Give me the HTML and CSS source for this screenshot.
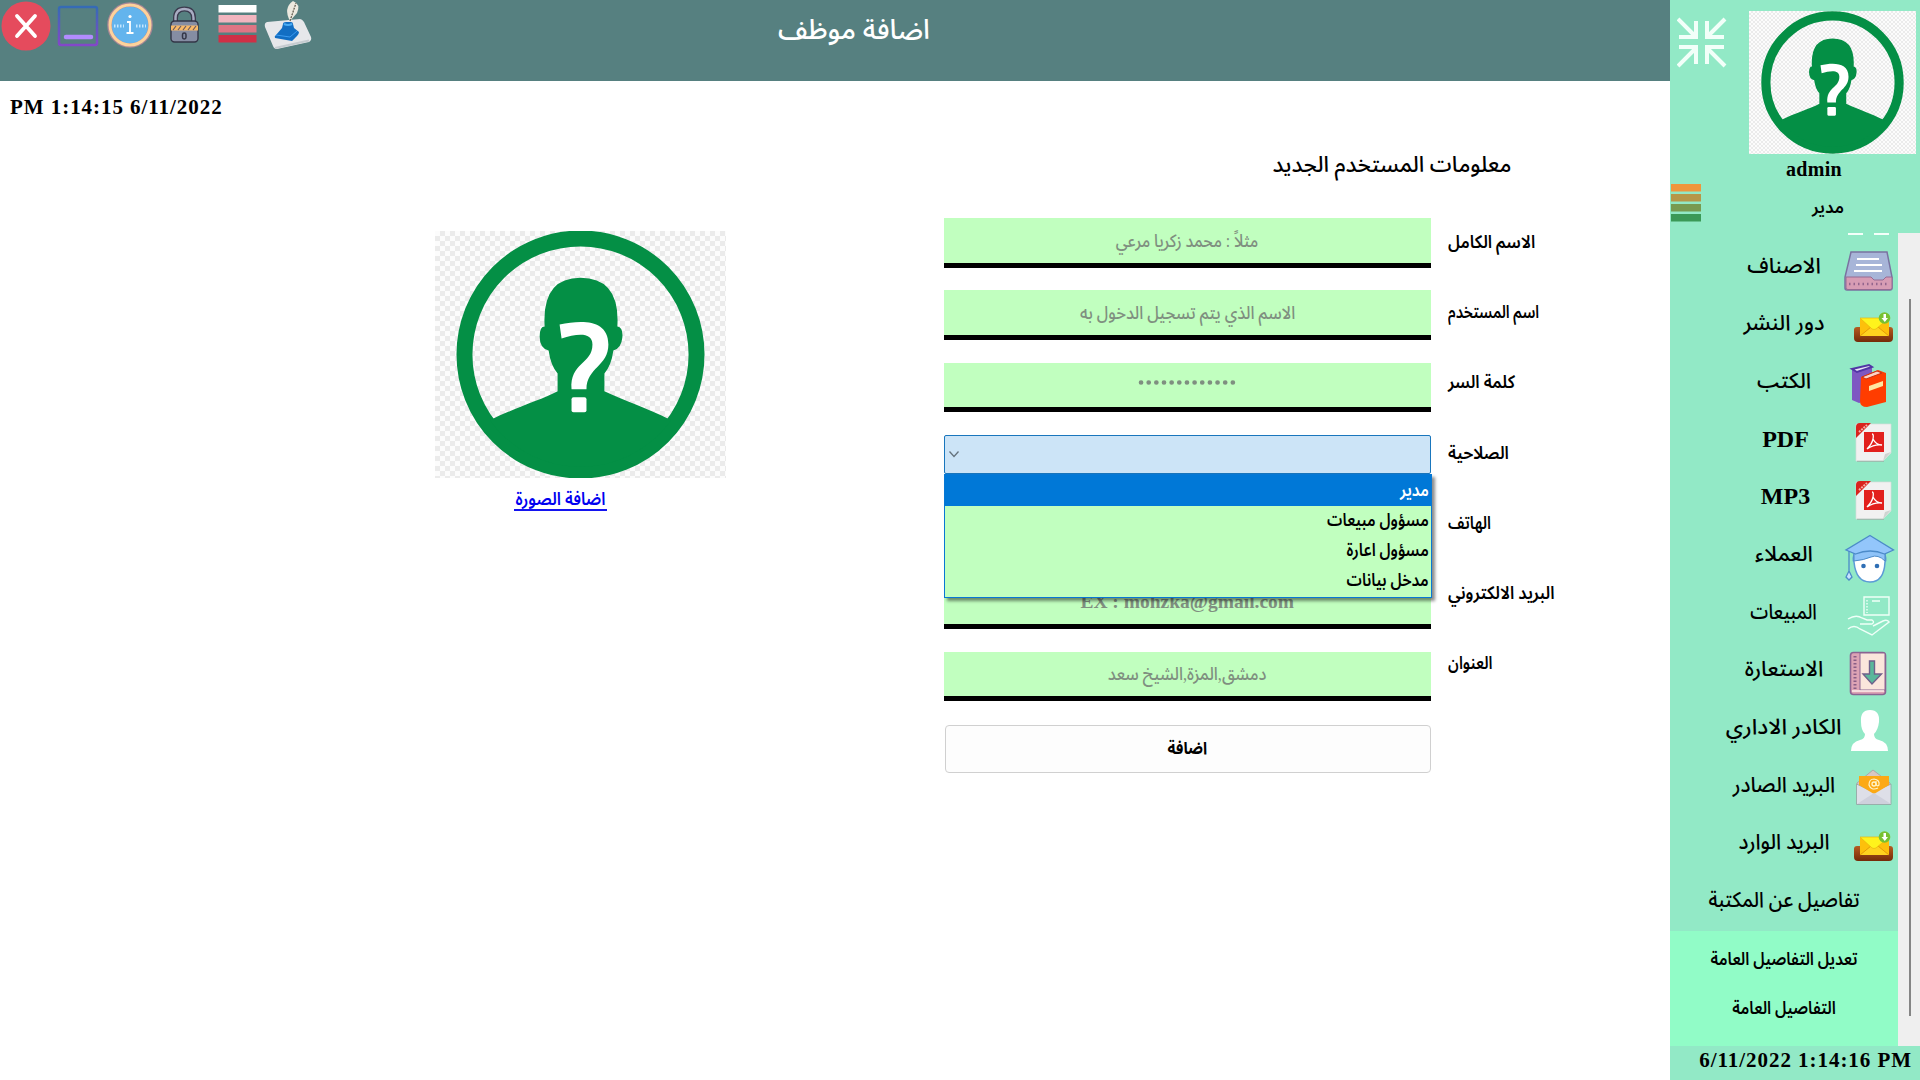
FILE: index.html
```html
<!DOCTYPE html>
<html lang="ar">
<head>
<meta charset="utf-8">
<title>اضافة موظف</title>
<link rel="stylesheet" href="styles.css">
</head>
<body>
<svg class="defs" width="0" height="0" aria-hidden="true">
  <symbol id="person" viewBox="0 0 250 248">
    <circle cx="125" cy="124" r="116.500" fill="none" stroke="#048f45" stroke-width="16"/>
    <path fill="#048f45" d="M34 190 C60 177 85 170 102 161 L102 143 Q95 135 93 120 Q84 118 84 106 Q84 96 89 96 Q86 47 125 47 Q165 47 162 96 Q168 97 167 107 Q166 118 158 120 Q156 135 149 143 L149 161 C168 170 190 177 216 190 A112 112 0 0 1 34 190Z"/>
    <path fill="#fff" d="M104 94 C127 89 153 89 153 114 C153 136 131 137 131 159 L116 159 C114 132 137 134 137 114 C137 101 121 103 106 108Z"/>
    <rect x="116" y="167" width="15" height="15" rx="2" fill="#fff"/>
  </symbol>
  <symbol id="inbox" viewBox="0 0 50 50">
    <defs><linearGradient id="wood" x2="0" y2="1"><stop stop-color="#b55b20"/><stop offset="1" stop-color="#752a08"/></linearGradient></defs>
    <path d="M9 27q0-3 3-3h3v7h29v-7h1q3 0 3 3v8q0 4-4 4H13q-4 0-4-4z" fill="url(#wood)"/>
    <path d="M15 16h29v17H15z" fill="#fdc00b"/>
    <path d="M15 33l11-9h7l11 9" fill="#ffd21f" stroke="#e59a08"/>
    <path d="M15 15h29L31 26q-2 1-4 0z" fill="#fff31c" stroke="#e9b50c" stroke-width=".7"/>
    <circle cx="39.500" cy="15" r="5.800" fill="#78c131"/><path d="M38.500 11h2.500v4h2l-3.200 4-3.300-4h2z" fill="#fff"/>
  </symbol>
  <symbol id="pdf" viewBox="0 0 50 50">
    <path d="M11 6h35v29l-8 8H11z" fill="#f1f1f1" stroke="#d7dcda" stroke-width=".7"/>
    <path d="M12 43.300h27" stroke="#9bb5a9"/><path d="M38 43l2-7 6-2z" fill="#cfd4d1"/>
    <path d="M11 14V9q0-4 4-4h11L11 20z" fill="#d9231d"/><path d="M14 14l8-7" stroke="#f5b0a8" stroke-width="2" stroke-dasharray="2 1"/>
    <path d="M19 14h20v20H19z" fill="#e2201d"/>
    <path d="M27 16q2 0 1 5t-6 10m6-10q3 6 9 6-8-1-15 4" fill="none" stroke="#fff" stroke-width="1.300"/>
  </symbol>
</svg>
<div class="app">
  <main class="main">
    <header class="topbar">
      <div class="tools">
        <svg width="320" height="60" viewBox="0 0 320 60">
          <circle cx="26" cy="26" r="24.500" fill="#e54b5d"/>
          <path d="M17 16L35 36M35 16L17 36" stroke="#fff" stroke-width="3.800" stroke-linecap="round"/>
          <defs><linearGradient id="win" x2="0" y2="1"><stop stop-color="#356bb5"/><stop offset="1" stop-color="#8347c9"/></linearGradient></defs>
          <rect x="59" y="7" width="38" height="38" rx="2" fill="none" stroke="url(#win)" stroke-width="2.500"/>
          <path d="M66 37h25" stroke="#b28cff" stroke-width="4.500" stroke-linecap="round"/>
          <circle cx="130" cy="25" r="20.500" fill="#63b4ed" stroke="#a88796" stroke-width="4.500"/>
          <circle cx="130" cy="25" r="20" fill="none" stroke="#fdd29b" stroke-width="3"/>
          <path d="M114 26h10M136 26h10" stroke="#c4e6ff" stroke-width="3" stroke-dasharray="1.500 1.500"/>
          <path d="M127 22h3v11m-3.500 0h7" fill="none" stroke="#fff" stroke-width="1.800"/><circle cx="130" cy="16.500" r="1.600" fill="#fff"/>
          <path d="M175.500 22v-4q0-9 9-9t9 9v4" fill="none" stroke="#3b3b4e" stroke-width="5"/>
          <path d="M175.500 22v-4q0-9 9-9t9 9v4" fill="none" stroke="#a9adc3" stroke-width="2.400"/>
          <rect x="171" y="21" width="27" height="21" rx="3.500" fill="#858da3" stroke="#333647" stroke-width="1.400"/>
          <path d="M171 25.500h27v5h-27z" fill="#f8b968"/>
          <path d="M173 30l3-4m2 4l3-4m2 4l3-4m2 4l3-4m2 4l3-4" stroke="#6a5960" stroke-width="1.200"/>
          <rect x="182.500" y="33" width="3.500" height="6" rx="1.700" fill="none" stroke="#333647" stroke-width="1.500"/>
          <path fill="#fff" d="M218.500 5h38v7.500h-38z"/><path fill="#f1b5bf" d="M218.500 15h38v7.500h-38z"/><path fill="#df7584" d="M218.500 25h38v7.500h-38z"/><path fill="#cf3046" d="M218.500 35h38v7.500h-38z"/>
          <path d="M267 22l33-3q2 0 4 3l7 15q1 3-2 5l-32 7q-3 0-4-3l-8-19q-1-4 2-5z" fill="#e6e7ea"/>
          <path d="M275 48l34-7.500" stroke="#c5cbd0" stroke-width="2"/>
          <path d="M283 24q0-2 3-2h5q2 0 2 2l1 4 5 4q0 2-2 4l-5 5-17-3q-1-2 1-3l6-7z" fill="#126ec3"/><path d="M284 24q4 2 8 0" fill="none" stroke="#4badf5" stroke-width="2"/><path d="M276 35l14 2 7-6" fill="none" stroke="#3c9bf0"/>
          <path d="M290 21Q283 8 293 1q8 3 4 12z" fill="#ece9df"/><path d="M290 21l6-18" stroke="#5b5548" stroke-width="1.200" stroke-dasharray="2 1"/>
        </svg>
      </div>
      <h1 class="title" dir="rtl">اضافة موظف</h1>
    </header>
    <p class="clock">PM 1:14:15 6/11/2022</p>
    <div class="content">
      <section class="photo">
        <div class="checker"><svg width="249" height="247"><use href="#person"/></svg></div>
        <a class="photo-link"><span class="squeeze" dir="rtl">اضافة الصورة</span></a>
      </section>
      <section class="form">
        <h2 class="heading" dir="rtl">معلومات المستخدم الجديد</h2>
        <div class="columns">
          <div class="fields">
            <div class="field" dir="rtl"><span class="hint">مثلاً : محمد زكريا مرعي</span></div>
            <div class="field" dir="rtl"><span class="hint wide">الاسم الذي يتم تسجيل الدخول به</span></div>
            <div class="field password"><svg width="98" height="8"><path d="M3 3.500h95" stroke="#7f8f80" stroke-width="4.600" stroke-linecap="round" stroke-dasharray=".1 7.550"/></svg></div>
            <div class="combo">
              <div class="combo-box"><svg width="12" height="8"><path d="M1.500 1.500l4.500 5 4.500-5" fill="none" stroke="#65727d" stroke-width="1.300"/></svg></div>
              <ul class="options" dir="rtl">
                <li class="active"><span>مدير</span></li>
                <li><span>مسؤول مبيعات</span></li>
                <li><span>مسؤول اعارة</span></li>
                <li><span>مدخل بيانات</span></li>
              </ul>
            </div>
            <div class="field"></div>
            <div class="field email">EX : mohzka@gmail.com</div>
            <div class="field" dir="rtl"><span class="hint wide">دمشق,المزة,الشيخ سعد</span></div>
            <button class="submit"><span class="squeeze">اضافة</span></button>
          </div>
          <div class="labels">
            <label>الاسم الكامل</label>
            <label class="tight">اسم المستخدم</label>
            <label>كلمة السر</label>
            <label>الصلاحية</label>
            <label class="short">الهاتف</label>
            <label>البريد الالكتروني</label>
            <label class="short">العنوان</label>
          </div>
        </div>
      </section>
    </div>
  </main>
  <aside class="sidebar">
    <div class="profile">
      <div class="profile-left">
        <svg width="50" height="52" viewBox="0 0 50 52" fill="none" stroke="#f2fff9" stroke-width="4"><path d="M1 2l17 17M2 20h17V4M48 2L31 19M47 20H30V4M1 49l17-17M2 30h17v17M48 49L31 32M47 30H30v17"/></svg>
        <svg width="32" height="40"><path fill="#ef963c" d="M1 2h30v7.500H1z"/><path fill="#b69748" d="M1 12h30v7.500H1z"/><path fill="#789a50" d="M1 22h30v7.500H1z"/><path fill="#3b9957" d="M1 32h30v7.500H1z"/></svg>
      </div>
      <div class="profile-right">
        <div class="checker small"><svg width="143" height="143"><use href="#person"/></svg></div>
        <b class="user">admin</b>
        <span class="role">مدير</span>
      </div>
    </div>
    <div class="menu">
      <nav class="items">
        <div class="clipped"><i></i><i></i></div>
        <div class="item"><span>الاصناف</span><svg viewBox="0 0 50 50"><path d="M6 7h36l5 25v11q0 2-2 2H2q-2 0-2-2V32z" fill="#a7b5d8" stroke="#7972a0" stroke-width="1.500"/><path d="M1 32h25l3 3h9l3-3h6v11q0 1.500-2 1.500H3q-2 0-2-1.500z" fill="#d79cb4" stroke="#966a93"/><path d="M12 14h22M11 20h26M9 26h28" stroke="#fff" stroke-width="2"/><path d="M4 39h40" stroke="#93658d" stroke-width="2.500" stroke-dasharray="1.500 3"/></svg></div>
        <div class="item"><span>دور النشر</span><svg><use href="#inbox"/></svg></div>
        <div class="item"><span>الكتب</span><svg viewBox="0 0 50 50"><path d="M7 10l16-5 4 2v33L14 43l-7-3z" fill="#7e57c2"/><path d="M7 9l17-4 3 2-15 5z" fill="#e8e4f5" stroke="#5135a5" stroke-width="2"/><path d="M16 17l17-7 8 3v29l-19 5q-7 0-7-6z" fill="#ff3d00"/><path d="M17 17l15-6 5 2-16 6z" fill="#fbd3c5" stroke="#cb2d0f"/><path d="M24 26l14-5v5l-14 5z" fill="#ffe7a0"/></svg></div>
        <div class="item latin"><span>PDF</span><svg><use href="#pdf"/></svg></div>
        <div class="item latin"><span>MP3</span><svg><use href="#pdf"/></svg></div>
        <div class="item"><span>العملاء</span><svg viewBox="0 0 50 50"><path d="M9 29q-2-3 1-10h29q3 7 1 10-1 20-15 20T9 29z" fill="#fff" stroke="#5b9bd6" stroke-width="1.500"/><path d="M9 28V18q15-6 31 0v10q-7-7-14-4T9 28z" fill="#8fc3f8" stroke="#4c8bc9"/><path d="M25 2.500l23.500 14.500-9 4q-14-6-29 0L1 17z" fill="#93c6fb" stroke="#4c8bc9" stroke-width="1.300"/><path d="M4 18v21M4 38l-3 6 3 3 3-3z" fill="#c8e4ff" stroke="#4c8bc9" stroke-width="1.300"/><circle cx="18.500" cy="33" r="2.300" fill="#2f6fb5"/><circle cx="32" cy="33" r="2.300" fill="#2f6fb5"/></svg></div>
        <div class="item"><span class="narrow">المبيعات</span><svg viewBox="0 0 50 50" fill="none" stroke="#effff8" stroke-width="1.400"><path d="M19 6h25v18H19zM27 10h8M3 28q8-5 14-1l5 2h5q3 2 0 4H15M3 38q6-5 12 0l12 6 17-13q-2-3-6-1l-10 5"/><path d="M22 9v13" stroke-dasharray="1.500 1.500"/></svg></div>
        <div class="item"><span>الاستعارة</span><svg viewBox="0 0 50 50"><rect x="5.500" y="3.500" width="35" height="42" rx="3" fill="#dda3b4" stroke="#8b6592" stroke-width="1.600"/><path d="M15 4h24q1 0 1 1v36H15z" fill="#fbe6dc" stroke="#8b6592"/><path d="M10 7v33" stroke="#895e85" stroke-width="3" stroke-dasharray="1.500 2"/><path d="M7 42h32" stroke="#fff0ec" stroke-width="1.500"/><path d="M24.500 12h5v13h7L27 35l-9-10h6.500z" fill="#5ab79b" stroke="#70618b" stroke-width="1.400"/></svg></div>
        <div class="item"><span class="lift">الكادر الاداري</span><svg viewBox="0 0 50 50"><path fill="#fff" d="M25 4q10 0 9 12-1 8-5 12 0 5 5 6 9 2 9 11H6q0-9 9-11 5-1 5-6-4-4-4-12Q15 4 25 4z"/></svg></div>
        <div class="item"><span class="mail">البريد الصادر</span><svg viewBox="0 0 50 50"><path d="M12 19L28 6l17 13v21H12z" fill="#d8c7c4" stroke="#a99ba0" stroke-width=".8"/><path d="M11.500 20l17 8 17.500-8v20.500H11.500z" fill="#dedfe8" stroke="#8fa5a1" stroke-width=".8"/><path d="M14 21V12h30v9l-15 9z" fill="#fca915"/><path d="M12 40l17-11 17 11" fill="#cfd0dc"/><circle cx="29" cy="20" r="2" fill="none" stroke="#fff4cb" stroke-width="1.300"/><path d="M33 24q-7 3-9-3 0-6 5-6 6 1 5 6-2 2-3-1v-3" fill="none" stroke="#fff4cb" stroke-width="1.200"/></svg></div>
        <div class="item"><span class="mail">البريد الوارد</span><svg><use href="#inbox"/></svg></div>
        <div class="item"><span class="long">تفاصيل عن المكتبة</span></div>
        <div class="submenu">
          <div class="sub">تعديل التفاصيل العامة</div>
          <div class="sub">التفاصيل العامة</div>
        </div>
      </nav>
      <div class="scrollbar"><div class="thumb"></div></div>
    </div>
    <p class="side-clock">6/11/2022 1:14:16 PM</p>
  </aside>
</div>
</body>
</html>
```
FILE: styles.css
```css
* { box-sizing: border-box; margin: 0; padding: 0; }
body {
  width: 1920px; height: 1080px; overflow: hidden; background: #fff; color: #000;
  font-family: "Liberation Serif", "Noto Sans Arabic", "DejaVu Sans Condensed", serif;
  white-space: nowrap;
}
svg { display: block; flex: none; }
.defs { position: absolute; }
.app { display: grid; grid-template-columns: 1670px 250px; height: 1080px; }
.main { display: flex; flex-direction: column; }

.topbar { display: grid; grid-template-columns: 420px 868px 1fr; height: 81px; background: #568080; }
.title { color: #fff; font-size: 27.500px; font-weight: 500; line-height: 59px; text-align: center; }
.clock { height: 52px; padding-left: 10px; font-size: 21px; font-weight: bold; line-height: 52px; letter-spacing: .95px; }

.content { display: flex; padding-left: 435px; }
.photo { display: flex; flex-direction: column; width: 508.500px; padding-top: 98px; }
.checker {
  display: flex; justify-content: center; width: 291px; height: 247px;
  background: repeating-conic-gradient(#ebebeb 0 25%, #fcfcfc 0 50%) 0 0 / 10px 10px;
}
.checker.small { width: 167px; height: 143px; background-size: 4px 4px; }
.photo-link { width: 93px; height: 25px; margin: 8px 0 0 79px; border-bottom: 2px solid #1414f0; color: #0000f0; font-size: 18px; font-weight: 600; line-height: 26px; display: flex; justify-content: center; }
.squeeze { display: inline-block; transform: scaleX(.89); }

.form { display: flex; flex-direction: column; width: 640px; }
.heading { height: 85px; padding-right: 72px; font-size: 22px; font-weight: 500; line-height: 63px; }
.columns { display: flex; gap: 17px; }
.fields { display: flex; flex-direction: column; gap: 22.700px; width: 487.500px; }
.field { display: flex; justify-content: center; align-items: center; height: 49.600px; padding-top: 1px; background: #c1ffbf; border-bottom: 5px solid #000; color: #7f8f80; font-size: 18px; line-height: 40px; }
.hint { display: inline-block; font-weight: 500; transform: scaleX(.87); }
.hint.wide { transform: scaleX(.9); }
.password { align-items: flex-start; padding-top: 16px; }
.email { font-size: 19.500px; font-weight: bold; }
.combo { position: relative; height: 49.600px; }
.combo-box { display: flex; align-items: center; height: 39px; padding-left: 3px; background: #cce4f7; border: 1.500px solid #1976bd; border-radius: 2px; }
.options { position: absolute; z-index: 1; top: 39px; left: 0; width: 488px; height: 124px; background: #c1ffbf; border: 1.500px solid #0878d4; list-style: none; box-shadow: 3px 3px 3px rgba(0,0,0,.45); }
.options li { height: 30px; padding-right: 2px; font-size: 18px; font-weight: 600; line-height: 28px; }
.options li.active { height: 31px; background: #0078d7; color: #fff; line-height: 30px; }
.options span { display: inline-block; transform: scaleX(.85); transform-origin: right; }
.submit { width: 486px; height: 48px; margin: 1px 0 0 1px; background: #fdfdfd; border: 1.500px solid #d0d0d0; border-radius: 4px; color: #000; font: bold 17px/42px "Liberation Serif", "Noto Sans Arabic", "DejaVu Sans Condensed", serif; }
.labels { display: flex; flex-direction: column; }
.labels label { height: 70.200px; font-size: 18px; font-weight: 600; line-height: 49px; transform: scaleX(.91); transform-origin: left; }
.labels .tight { transform: scaleX(.81); }
.labels .short { transform: scaleX(.84); }

.sidebar { display: flex; flex-direction: column; background: #92e9c6; }
.profile { display: flex; height: 233px; }
.profile-left { display: flex; flex-direction: column; justify-content: space-between; width: 78px; padding: 17px 0 11px 0; }
.profile-left svg:first-child { margin-left: 7px; }
.profile-right { display: flex; flex-direction: column; width: 167px; padding-top: 11px; }
.profile-right .small { margin-left: .5px; }
.user { width: 132px; font-size: 20px; line-height: 30px; text-align: center; letter-spacing: .3px; }
.role { width: 160px; font-size: 17px; font-weight: 600; line-height: 48px; text-align: center; }
.menu { display: grid; grid-template-columns: 228px 22px; height: 813px; }
.items { display: flex; flex-direction: column; }
.clipped { display: flex; gap: 11px; height: 4.500px; padding-left: 178px; }
.clipped i { width: 15px; height: 2px; background: #f4fffa; }
.item { display: grid; height: 57.650px; font-size: 21.500px; font-weight: 500; }
.item > * { grid-area: 1 / 1; }
.item span { align-self: center; justify-self: center; line-height: 57px; }
.item svg { align-self: end; justify-self: end; width: 50px; height: 50px; margin-right: 3px; overflow: visible; }
.item.latin { font-size: 24px; font-weight: bold; }
.latin span { padding-left: 3px; }
.item .lift { transform: scaleX(1.040); }
.item .mail { transform: scaleX(.95); }
.item .narrow { transform: scaleX(.84); }
.item .long { transform: scaleX(.9); }
.submenu { display: flex; flex-direction: column; flex: 1; margin-top: 2px; padding-top: 4px; background: #91fcc7; }
.sub { height: 49px; font-size: 18px; font-weight: 600; line-height: 49px; text-align: center; transform: scaleX(.87); }
.scrollbar { background: #efefef; padding: 66px 0 0 11px; }
.thumb { width: 2px; height: 717px; background: #858585; }
.side-clock { padding-right: 8px; font-size: 21px; font-weight: bold; line-height: 28px; text-align: right; letter-spacing: .95px; }
```
